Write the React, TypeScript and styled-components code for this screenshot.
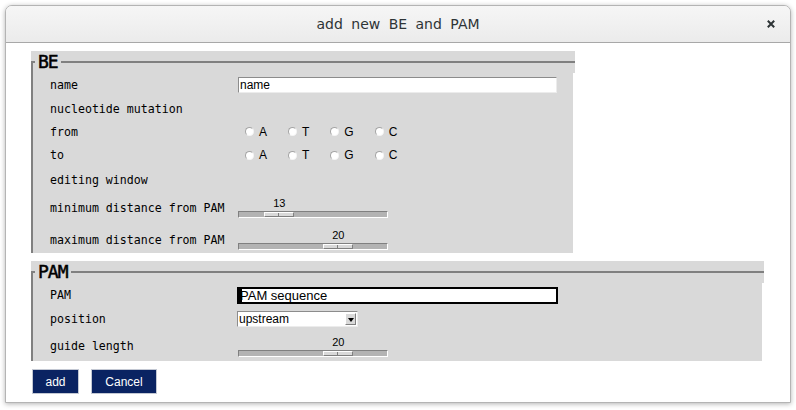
import React from "react";
import styled, { createGlobalStyle } from "styled-components";

const GlobalStyle = createGlobalStyle`
  html, body { margin: 0; padding: 0; background: #fff; }
  body { font-family: "Liberation Sans", Arial, sans-serif; }
  *, *::before, *::after { box-sizing: border-box; }
`;

const Page = styled.div`
  width: 796px;
  height: 410px;
  padding: 5px;
`;

const Window = styled.div`
  width: 786px;
  height: 398px;
  border: 1px solid #b4b4b4;
  border-radius: 7px 7px 0 0;
  background: #fff;
  box-shadow: 0 1px 5px rgba(0, 0, 0, 0.3);
  display: flex;
  flex-direction: column;
  overflow: hidden;
`;

const TitleBar = styled.div`
  flex: none;
  height: 37px;
  display: grid;
  grid-template-columns: 1fr auto 1fr;
  align-items: center;
  background: linear-gradient(#f6f6f6, #ebebeb);
  border-bottom: 1px solid #a8a8a8;
`;

const Title = styled.div`
  grid-column: 2;
  font-family: "DejaVu Sans", sans-serif;
  font-size: 14px;
  word-spacing: 4px;
  color: #2e3436;
`;

const CloseBtn = styled.div`
  grid-column: 3;
  justify-self: end;
  margin-right: 15px;
  width: 8px;
  height: 8px;
  display: flex;
`;

const Content = styled.div`
  flex: 1;
  display: flex;
  flex-direction: column;
  align-items: flex-start;
  gap: 8px;
  padding: 8px 0 8px 25px;
`;

const Group = styled.section<{ $w: number }>`
  width: ${(p) => p.$w}px;
  display: flex;
  flex-direction: column;
`;

const GroupHead = styled.div`
  height: 22px;
  background: #d9d9d9;
  display: flex;
  align-items: center;
`;

const Corner = styled.span`
  align-self: flex-end;
  width: 4px;
  height: 12px;
  border-top: 2px solid #808080;
  border-left: 2px solid #808080;
  margin-right: 3px;
`;

const Legend = styled.span`
  font-family: "DejaVu Sans Mono", monospace;
  font-size: 18px;
  letter-spacing: -1px;
  line-height: 22px;
  color: #000;
  -webkit-text-stroke: 0.5px #000;
`;

const HeadLine = styled.span`
  flex: 1;
  height: 2px;
  margin-left: 3px;
  background: #808080;
`;

const GroupBody = styled.div`
  background: #d9d9d9;
  border-left: 2px solid #808080;
  margin-right: 2px;
  padding-left: 17px;
  display: flex;
  flex-direction: column;
`;

const Row = styled.div<{ $h: number; $pt?: number }>`
  height: ${(p) => p.$h}px;
  padding-top: ${(p) => p.$pt ?? 0}px;
  display: grid;
  grid-template-columns: 188px 1fr;
  align-items: center;
`;

const Label = styled.div`
  font-family: "DejaVu Sans Mono", monospace;
  font-size: 11.6px;
  color: #000;
  white-space: nowrap;
`;

const Field = styled.div<{ $w: number; $h: number; $focus?: boolean; $size?: number }>`
  width: ${(p) => p.$w}px;
  height: ${(p) => p.$h}px;
  margin-left: ${(p) => (p.$focus ? -1 : 0)}px;
  background: #fff;
  border-style: solid;
  border-width: ${(p) => (p.$focus ? "2px" : "1px")};
  border-color: ${(p) => (p.$focus ? "#000" : "#8c8c8c #ececec #ececec #8c8c8c")};
  padding-left: ${(p) => (p.$focus ? 0 : 1)}px;
  display: flex;
  align-items: center;
  font-family: "Liberation Sans", Arial, sans-serif;
  font-size: ${(p) => p.$size ?? 12}px;
  color: #000;
  white-space: nowrap;
  overflow: hidden;
`;

const Caret = styled.span`
  width: 3px;
  height: 13px;
  background: #000;
  margin-right: -2px;
  flex: none;
`;

const Select = styled.div`
  width: 121px;
  height: 16px;
  margin-left: -1px;
  background: #fff;
  border: 1px solid;
  border-color: #8c8c8c #ececec #ececec #8c8c8c;
  display: flex;
  align-items: center;
  padding-left: 1px;
  font-family: "Liberation Sans", Arial, sans-serif;
  font-size: 12px;
  color: #000;
`;

const SelectText = styled.span`
  flex: 1;
`;

const ArrowBtn = styled.span`
  width: 11px;
  height: 12px;
  margin-right: 1px;
  background: #d9d9d9;
  border: 1px solid;
  border-color: #fff #808080 #808080 #fff;
  display: flex;
  align-items: center;
  justify-content: center;

  &::after {
    content: "";
    border-left: 3px solid transparent;
    border-right: 3px solid transparent;
    border-top: 4px solid #000;
    margin-top: 1px;
  }
`;

const RadioGroup = styled.div`
  display: flex;
  align-items: center;
  gap: 21px;
  padding-left: 7px;
`;

const RadioItem = styled.label`
  display: flex;
  align-items: center;
  gap: 5px;
  font-family: "Liberation Sans", Arial, sans-serif;
  font-size: 12px;
  color: #000;
`;

const Dot = styled.span`
  width: 9px;
  height: 9px;
  border-radius: 50%;
  background: #fff;
  border: 1px solid;
  border-color: #a4a4a4 #f4f4f4 #f4f4f4 #a4a4a4;
`;

const SliderBox = styled.div`
  width: 150px;
  display: flex;
  flex-direction: column;
`;

const SliderValue = styled.div`
  width: 30px;
  height: 12px;
  line-height: 12px;
  text-align: center;
  font-family: "Liberation Sans", Arial, sans-serif;
  font-size: 11px;
  color: #000;
`;

const Trough = styled.div`
  height: 7px;
  margin-top: 2px;
  background: #b3b3b3;
  border: 1px solid;
  border-color: #808080 #fff #fff #808080;
  display: flex;
`;

const Thumb = styled.div`
  width: 30px;
  height: 5px;
  background: #d9d9d9;
  border: 1px solid;
  border-color: #fff #808080 #808080 #fff;
  position: relative;

  &::after {
    content: "";
    position: absolute;
    left: 13px;
    top: 0;
    width: 1px;
    height: 3px;
    background: #808080;
  }
`;

const ButtonRow = styled.div`
  display: flex;
  gap: 12px;
  margin-left: 1px;
`;

const Button = styled.button<{ $w: number }>`
  width: ${(p) => p.$w}px;
  height: 25px;
  padding: 0;
  background: #0a2362;
  border: 1px solid #c3c8d3;
  color: #fff;
  font-family: "Liberation Sans", Arial, sans-serif;
  font-size: 12px;
`;

const MIN = 10;
const MAX = 24;
const RANGE_PX = 118;

function Slider({ value }: { value: number }) {
  const off = ((value - MIN) / (MAX - MIN)) * RANGE_PX;
  return (
    <SliderBox>
      <SliderValue style={{ marginLeft: off + 1 }}>{value}</SliderValue>
      <Trough>
        <Thumb style={{ marginLeft: off }} />
      </Trough>
    </SliderBox>
  );
}

function Radios({ name }: { name: string }) {
  return (
    <RadioGroup>
      {["A", "T", "G", "C"].map((b) => (
        <RadioItem key={name + b}>
          <Dot />
          {b}
        </RadioItem>
      ))}
    </RadioGroup>
  );
}

function Fieldset({ title, width, children }: { title: string; width: number; children: React.ReactNode }) {
  return (
    <Group $w={width}>
      <GroupHead>
        <Corner />
        <Legend>{title}</Legend>
        <HeadLine />
      </GroupHead>
      <GroupBody>{children}</GroupBody>
    </Group>
  );
}

export default function App() {
  return (
    <Page>
      <GlobalStyle />
      <Window>
        <TitleBar>
          <Title>add new BE and PAM</Title>
          <CloseBtn>
            <svg width="8" height="8" viewBox="0 0 8 8">
              <path d="M0.8 0.8 L7.2 7.2 M7.2 0.8 L0.8 7.2" stroke="#2e3436" strokeWidth="2" />
            </svg>
          </CloseBtn>
        </TitleBar>
        <Content>
          <Fieldset title="BE" width={544}>
            <Row $h={24}>
              <Label>name</Label>
              <Field $w={319} $h={16}>name</Field>
            </Row>
            <Row $h={23}>
              <Label>nucleotide mutation</Label>
            </Row>
            <Row $h={23}>
              <Label>from</Label>
              <Radios name="from" />
            </Row>
            <Row $h={24}>
              <Label>to</Label>
              <Radios name="to" />
            </Row>
            <Row $h={26}>
              <Label>editing window</Label>
            </Row>
            <Row $h={29}>
              <Label>minimum distance from PAM</Label>
              <Slider value={13} />
            </Row>
            <Row $h={31} $pt={4}>
              <Label>maximum distance from PAM</Label>
              <Slider value={20} />
            </Row>
          </Fieldset>
          <Fieldset title="PAM" width={733}>
            <Row $h={24}>
              <Label>PAM</Label>
              <Field $w={321} $h={17} $focus $size={13}>
                <Caret />
                PAM sequence
              </Field>
            </Row>
            <Row $h={24}>
              <Label>position</Label>
              <Select>
                <SelectText>upstream</SelectText>
                <ArrowBtn />
              </Select>
            </Row>
            <Row $h={30}>
              <Label>guide length</Label>
              <Slider value={20} />
            </Row>
          </Fieldset>
          <ButtonRow>
            <Button $w={47}>add</Button>
            <Button $w={66}>Cancel</Button>
          </ButtonRow>
        </Content>
      </Window>
    </Page>
  );
}
